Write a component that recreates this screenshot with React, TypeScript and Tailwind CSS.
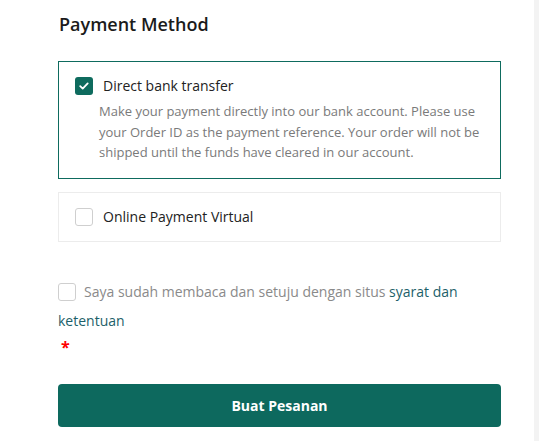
import React from "react";

const font = { fontFamily: '"Open Sans", "Noto Sans", sans-serif' };

const Check = ({ checked }: { checked?: boolean }) =>
  checked ? (
    <span className="flex h-[18px] w-[18px] shrink-0 items-center justify-center rounded-[3px] bg-[#0e6b5e]">
      <svg width="12" height="12" viewBox="0 0 12 12" fill="none">
        <path d="M2.2 6.2l2.5 2.4 5-5.2" stroke="white" strokeWidth="1.8" strokeLinecap="round" strokeLinejoin="round" />
      </svg>
    </span>
  ) : (
    <span className="block h-[18px] w-[18px] shrink-0 rounded-[3px] border border-[#cfcfcf] bg-white" />
  );

export default function App() {
  return (
    <div className="flex h-[441px] w-[539px] bg-white" style={font}>
      <div className="flex-1 pl-[58px] pt-[10px]">
        <div className="w-[443px]">
          <h2 className="pl-[1px] text-[18px] font-semibold leading-[28px] text-[#1b1b1b]">Payment Method</h2>

          <div className="mt-[23px] border border-[#0e6b5e] pb-[15px] pl-[16px] pr-[20px] pt-[13px]">
            <div className="flex items-center gap-[10px]">
              <Check checked />
              <span className="text-[14px] text-[#222]">Direct bank transfer</span>
            </div>
            <p className="mt-[5px] pl-[24px] text-[13px] leading-[20.5px] text-[#7a7a7a]">
              Make your payment directly into our bank account. Please use your Order ID as the payment reference. Your order will not be shipped until the funds have cleared in our account.
            </p>
          </div>

          <div className="mt-[13px] flex h-[50px] items-center gap-[10px] border border-[#ececec] pl-[16px]">
            <Check />
            <span className="text-[14px] text-[#222]">Online Payment Virtual</span>
          </div>

          <div className="mt-[35px] flex items-start text-[14px] leading-[29px] text-[#8a8a8a]">
            <p>
              <span className="mr-[8px] inline-block h-[18px] w-[18px] rounded-[3px] border border-[#cfcfcf] align-[-4px]" />
              Saya sudah membaca dan setuju dengan situs{" "}
              <span className="text-[#1d5f6a]">syarat dan ketentuan</span>
            </p>
          </div>
          <div className="mt-[2px] pl-[3px] text-[16px] font-bold leading-[20px] text-[#ff0000]">*</div>

          <button className="mt-[27px] flex h-[43px] w-full items-center justify-center rounded-[4px] bg-[#0d695e] text-[14px] font-bold text-white">
            Buat Pesanan
          </button>
        </div>
      </div>
      <div className="w-[5px] bg-[#f3f3f3]" />
    </div>
  );
}
